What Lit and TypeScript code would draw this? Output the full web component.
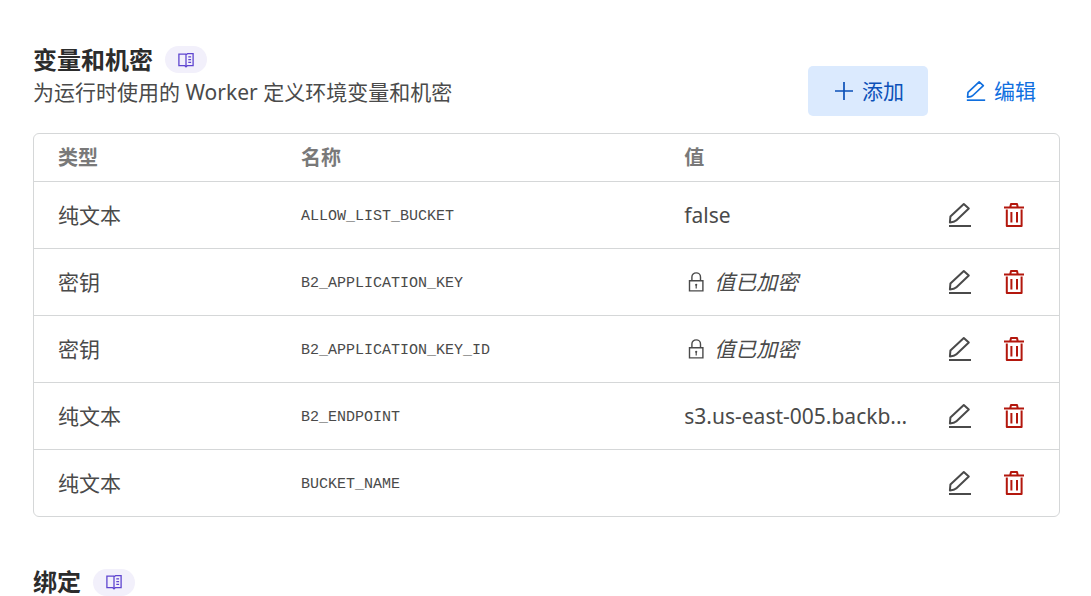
import { LitElement, html, css, svg } from "lit";
import { customElement, property } from "lit/decorators.js";

interface Variable {
  kind: string;
  name: string;
  value: string;
  secret?: boolean;
}

const variables: Variable[] = [
  { kind: "纯文本", name: "ALLOW_LIST_BUCKET", value: "false" },
  { kind: "密钥", name: "B2_APPLICATION_KEY", value: "值已加密", secret: true },
  { kind: "密钥", name: "B2_APPLICATION_KEY_ID", value: "值已加密", secret: true },
  { kind: "纯文本", name: "B2_ENDPOINT", value: "s3.us-east-005.backb..." },
  { kind: "纯文本", name: "BUCKET_NAME", value: "" },
];

const shapes = {
  book: {
    box: "0 0 16 16",
    body: svg`<path stroke-width="1.3" d="M8 2.2H.9v11.4h5.6L8 14.8l1.5-1.2h5.6V1.6H9.6L8 2.6v12M10.3 4.9h2.8M10.3 7.6h2.8M10.3 10.3h2.8" />`,
  },
  plus: {
    box: "0 0 20 20",
    body: svg`<path stroke-width="1.7" d="M10 1v18M1 10h18" />`,
  },
  pencil: {
    box: "0 0 24 26",
    body: svg`<path stroke-width="2" d="M1.9 20.4 2.4 14.6 15.8 2l5 4.6L8.2 18.4 5.6 19.8Z" stroke-linejoin="round" /><path stroke-width="2" d="M1 24h22" />`,
  },
  trash: {
    box: "0 0 24 26",
    body: svg`<path stroke-width="2" stroke-linejoin="round" d="M2 5.5h20M8.3 5l.7-3h6l.7 3M4.8 7.5V24h14.8V7.5M9.4 10v10.6M15 10v10.6" />`,
  },
  lock: {
    box: "0 0 16 20",
    body: svg`<path stroke-width="1.4" d="M1.5 8.7h13.4v10.2H1.5ZM3.9 8.5V5a4.3 4.1 0 0 1 8.6 0v3.5" /><path stroke-width="1.2" d="M8.2 13v3.4" /><circle cx="8.2" cy="12.8" r="1.1" fill="currentColor" stroke="none" />`,
  },
};

@customElement("ui-icon")
export class UiIcon extends LitElement {
  @property() name: keyof typeof shapes = "book";

  static styles = css`
    :host {
      display: inline-flex;
      flex: none;
    }
    .glyph {
      width: 100%;
      height: 100%;
      fill: none;
      stroke: currentColor;
    }
  `;

  render() {
    const shape = shapes[this.name];
    return html`<svg class="glyph" viewBox=${shape.box} aria-hidden="true">${shape.body}</svg>`;
  }
}

@customElement("section-title")
export class SectionTitle extends LitElement {
  @property() text = "";

  static styles = css`
    :host {
      display: flex;
      align-items: center;
      gap: 12px;
    }
    .title {
      margin: 0;
      font-size: 24px;
      line-height: 24px;
      font-weight: 700;
      color: #2c2c2c;
    }
    .docs {
      display: flex;
      align-items: center;
      justify-content: center;
      width: 42px;
      height: 27px;
      border-radius: 14px;
      background: #f2f0fb;
      color: #5f45d0;
    }
    .book {
      width: 16px;
      height: 16px;
    }
  `;

  render() {
    return html`
      <h2 class="title">${this.text}</h2>
      <a class="docs" href="#docs" aria-label=${this.text}><ui-icon class="book" name="book"></ui-icon></a>
    `;
  }
}

@customElement("app-root")
export class AppRoot extends LitElement {
  static styles = css`
    :host {
      display: block;
      box-sizing: border-box;
      padding: 46px 31px 0 33px;
      background: #fff;
      color: #4a4a4a;
      font-family: "Noto Sans", "Noto Sans CJK SC", sans-serif;
      font-size: 21px;
      line-height: 32px;
    }
    .head {
      display: flex;
      justify-content: space-between;
      align-items: flex-end;
      margin-bottom: 17px;
    }
    .intro {
      display: flex;
      flex-direction: column;
      padding-bottom: 4px;
    }
    .lead {
      margin: 0;
      line-height: 39px;
    }
    .actions {
      display: flex;
      gap: 16px;
    }
    .button {
      display: flex;
      align-items: center;
      gap: 8px;
      height: 50px;
      padding: 0 24px 0 22px;
      border: 0;
      border-radius: 5px;
      background: none;
      color: #106fdf;
      font: inherit;
      cursor: pointer;
    }
    .primary {
      padding: 0 24px 0 26px;
      background: #dbeafe;
      color: #0b50b8;
    }
    .small {
      width: 20px;
      height: 22px;
    }
    .frame {
      border: 1px solid #d5d7d8;
      border-radius: 6px;
    }
    .table {
      width: 100%;
      table-layout: fixed;
      border-collapse: collapse;
    }
    .label {
      box-sizing: border-box;
      height: 47px;
      padding: 2px 0 0 24px;
      text-align: left;
      font-size: 20px;
      font-weight: 700;
      color: #797979;
    }
    .kind {
      width: 23.7%;
    }
    .name {
      width: 37.4%;
    }
    .tools {
      width: 13%;
    }
    .cell {
      height: 66px;
      padding: 0 0 0 24px;
      border-top: 1px solid #d5d7d8;
      white-space: nowrap;
    }
    .code {
      font-family: "Liberation Mono", monospace;
      font-size: 15px;
    }
    .secret {
      display: flex;
      align-items: center;
      gap: 10px;
      padding-left: 4px;
    }
    .lock {
      width: 16px;
      height: 20px;
    }
    .row-tools {
      display: flex;
      justify-content: flex-end;
      gap: 30px;
      padding-right: 33px;
    }
    .tool {
      display: flex;
      padding: 0;
      border: 0;
      background: none;
      color: #4a4a4a;
      cursor: pointer;
    }
    .danger {
      color: #b3170d;
    }
    .tool-icon {
      width: 24px;
      height: 26px;
    }
    .next {
      margin-top: 52px;
    }
  `;

  private row(v: Variable) {
    return html`
      <tr>
        <td class="cell">${v.kind}</td>
        <td class="cell"><span class="code">${v.name}</span></td>
        <td class="cell">
          ${v.secret
            ? html`<div class="secret"><ui-icon class="lock" name="lock"></ui-icon><em>${v.value}</em></div>`
            : v.value}
        </td>
        <td class="cell">
          <div class="row-tools">
            <button class="tool" type="button" aria-label="编辑">
              <ui-icon class="tool-icon" name="pencil"></ui-icon>
            </button>
            <button class="tool danger" type="button" aria-label="删除">
              <ui-icon class="tool-icon" name="trash"></ui-icon>
            </button>
          </div>
        </td>
      </tr>
    `;
  }

  render() {
    return html`
      <header class="head">
        <div class="intro">
          <section-title text="变量和机密"></section-title>
          <p class="lead">为运行时使用的 Worker 定义环境变量和机密</p>
        </div>
        <div class="actions">
          <button class="button primary" type="button">
            <ui-icon class="small" name="plus"></ui-icon>添加
          </button>
          <button class="button" type="button">
            <ui-icon class="small" name="pencil"></ui-icon>编辑
          </button>
        </div>
      </header>
      <div class="frame">
        <table class="table">
          <thead>
            <tr>
              <th class="label kind" scope="col">类型</th>
              <th class="label name" scope="col">名称</th>
              <th class="label" scope="col">值</th>
              <td class="label tools"></td>
            </tr>
          </thead>
          <tbody>
            ${variables.map((v) => this.row(v))}
          </tbody>
        </table>
      </div>
      <section-title class="next" text="绑定"></section-title>
    `;
  }
}
